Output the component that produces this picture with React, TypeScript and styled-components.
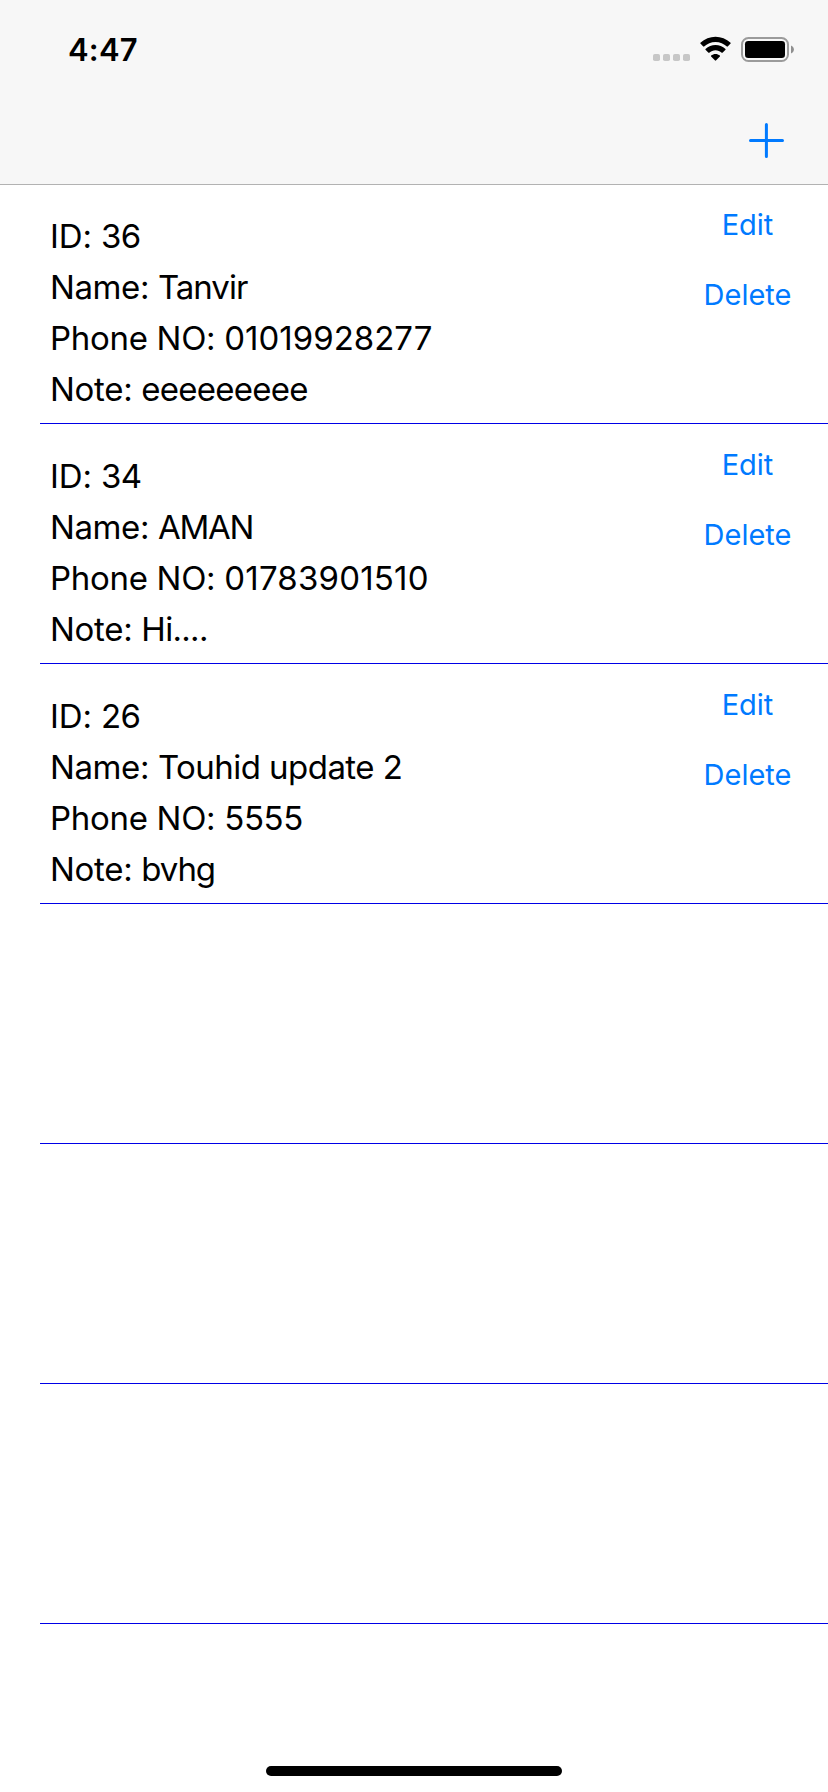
import React from "react";
import styled, { createGlobalStyle } from "styled-components";

const GlobalStyle = createGlobalStyle`
  * { box-sizing: border-box; }
  body { margin: 0; background: #fff; }
`;

const Screen = styled.div`
  display: flex;
  flex-direction: column;
  width: 828px;
  height: 1792px;
  overflow: hidden;
  background: #fff;
  color: #000;
  font-family: Inter, "Liberation Sans", sans-serif;
`;

const Header = styled.header`
  flex: none;
  height: 185px;
  background: #f7f7f7;
  border-bottom: 1px solid #b2b2b2;
`;

const StatusBar = styled.div`
  display: flex;
  justify-content: space-between;
  height: 96px;
  padding: 30px 34px 0 68px;
`;

const Time = styled.time`
  font-size: 31px;
  font-weight: 600;
  line-height: 40px;
  letter-spacing: 0.2px;
`;

const StatusIcons = styled.svg`
  display: block;
  width: 144px;
  height: 40px;
`;

const NavBar = styled.nav`
  display: flex;
  justify-content: flex-end;
  height: 88px;
  padding: 26px 44px 0 0;
`;

const AddButton = styled.button`
  width: 36px;
  height: 36px;
  padding: 0;
  border: 0;
  background: none;
`;

const List = styled.ul`
  flex: 1;
  min-height: 0;
  margin: 0;
  padding: 0 0 0 40px;
  list-style: none;
  overflow: hidden;
`;

const Row = styled.li`
  display: flex;
  justify-content: space-between;
  height: 240px;
  border-bottom: 1px solid #0000e6;
  &:first-child { height: 239px; }
  &:first-child > * { margin-top: -1px; }
`;

const Details = styled.div`
  padding: 27px 0 0 10px;
`;

const Line = styled.p`
  margin: 0;
  font-size: 33px;
  line-height: 51px;
  white-space: pre;
`;

const Tracked = styled.span<{ $tracking: number }>`
  letter-spacing: ${(p) => p.$tracking}px;
`;

const Actions = styled.div`
  display: flex;
  flex-direction: column;
  align-items: center;
  width: 88px;
  margin-right: 36.5px;
  padding-top: 6px;
`;

const Action = styled.button`
  height: 70px;
  padding: 0;
  border: 0;
  background: none;
  color: #007aff;
  font-family: inherit;
  font-size: 29px;
  line-height: 70px;
`;

const Footer = styled.footer`
  display: flex;
  flex: none;
  justify-content: center;
  height: 26px;
`;

const HomeIndicator = styled.div`
  width: 296px;
  height: 10px;
  border-radius: 5px;
  background: #000;
`;

type Field = { value: string; tracking: number };
type Contact = { id: Field; name: Field; phone: Field; note: Field };

const labels: { key: keyof Contact; text: string; tracking: number }[] = [
  { key: "id", text: "ID: ", tracking: -0.1 },
  { key: "name", text: "Name: ", tracking: -0.4 },
  { key: "phone", text: "Phone NO: ", tracking: -0.3 },
  { key: "note", text: "Note: ", tracking: -0.3 },
];

const contacts: Contact[] = [
  {
    id: { value: "36", tracking: -0.6 },
    name: { value: "Tanvir", tracking: -1 },
    phone: { value: "01019928277", tracking: 0 },
    note: { value: "eeeeeeeee", tracking: -0.75 },
  },
  {
    id: { value: "34", tracking: -0.6 },
    name: { value: "AMAN", tracking: -1.3 },
    phone: { value: "01783901510", tracking: 0.2 },
    note: { value: "Hi....", tracking: -0.7 },
  },
  {
    id: { value: "26", tracking: -0.6 },
    name: { value: "Touhid update 2", tracking: -0.55 },
    phone: { value: "5555", tracking: -0.4 },
    note: { value: "bvhg", tracking: -1.1 },
  },
];

const emptyRows = [0, 1, 2];

export default function App() {
  return (
    <>
      <GlobalStyle />
      <Screen>
        <Header>
          <StatusBar>
            <Time>4:47</Time>
            <StatusIcons viewBox="650 30 144 40" aria-hidden="true">
              <g fill="#c7c7c7">
                <rect x="653" y="54" width="7" height="7" rx="1.8" />
                <rect x="663" y="54" width="7" height="7" rx="1.8" />
                <rect x="673" y="54" width="7" height="7" rx="1.8" />
                <rect x="683" y="54" width="7" height="7" rx="1.8" />
              </g>
              <path d="M715.5 41.9c4.4 0 8.4 1.7 11.4 4.6.2.2.6.2.8 0l2.900-2.900c.2-.2.2-.6 0-.8-8.400-8.000-21.800-8.000-30.200 0-.2.2-.2.6 0 .8l2.900 2.900c.2.2.6.2.8 0 3-2.900 7-4.600 11.400-4.600Z" />
              <path d="M715.5 50.300c2.300 0 4.500.9 6.200 2.400.2.2.6.2.8 0l3-3c.2-.2.2-.6 0-.8-5.600-5.300-14.400-5.300-20 0-.2.2-.2.6 0 .8l3 3c.2.2.6.2.8 0 1.700-1.500 3.900-2.400 6.200-2.400Z" />
              <path d="M719.900 55.600c.2.2.2.6 0 .800l-4 4.200c-.2.2-.6.2-.8 0l-4-4.200c-.2-.2-.2-.6 0-.8 2.500-2.100 6.300-2.100 8.800 0Z" />
              <rect x="742" y="38" width="46" height="23" rx="6.500" fill="none" stroke="#9b9b9b" strokeWidth="2" />
              <rect x="745" y="41" width="40" height="17" rx="3.300" />
              <path d="M791 45.500c1.700.7 2.900 2.200 2.900 4s-1.200 3.300-2.900 4Z" fill="#8f8f8f" />
            </StatusIcons>
          </StatusBar>
          <NavBar>
            <AddButton aria-label="Add contact">
              <svg width="36" height="36" viewBox="0 0 36 36" fill="none" stroke="#007aff" strokeWidth="3" strokeLinecap="round">
                <path d="M18.400 2.500v32M2.500 18.500h32" />
              </svg>
            </AddButton>
          </NavBar>
        </Header>
        <List>
          {contacts.map((contact) => (
            <Row key={contact.id.value}>
              <Details>
                {labels.map((label) => (
                  <Line key={label.key}>
                    <Tracked $tracking={label.tracking}>{label.text}</Tracked>
                    <Tracked $tracking={contact[label.key].tracking}>{contact[label.key].value}</Tracked>
                  </Line>
                ))}
              </Details>
              <Actions>
                <Action>Edit</Action>
                <Action>Delete</Action>
              </Actions>
            </Row>
          ))}
          {emptyRows.map((i) => (
            <Row key={i} />
          ))}
        </List>
        <Footer>
          <HomeIndicator />
        </Footer>
      </Screen>
    </>
  );
}
